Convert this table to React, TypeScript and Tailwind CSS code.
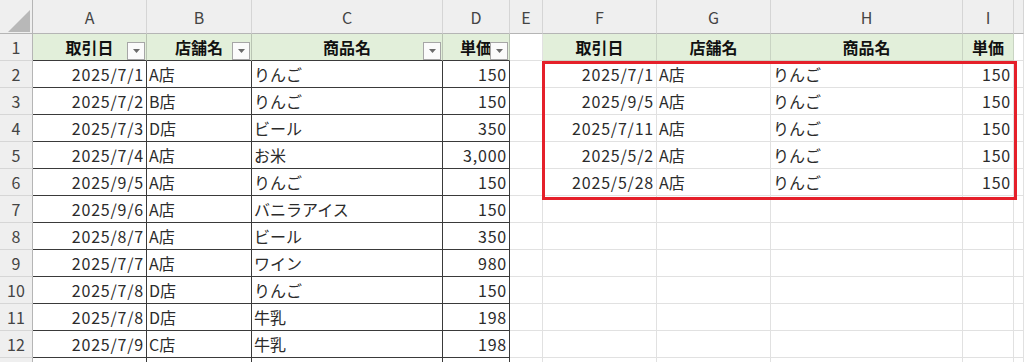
import React from 'react';

type Col = { letter: string; w: string };

const COLS: Col[] = [
  { letter: 'A', w: 'w-[114px]' },
  { letter: 'B', w: 'w-[105px]' },
  { letter: 'C', w: 'w-[191px]' },
  { letter: 'D', w: 'w-[67px]' },
  { letter: 'E', w: 'w-[33px]' },
  { letter: 'F', w: 'w-[114px]' },
  { letter: 'G', w: 'w-[114px]' },
  { letter: 'H', w: 'w-[192px]' },
  { letter: 'I', w: 'w-[51px]' },
  { letter: '', w: 'flex-1' },
];

// left table (A-D) and extracted rows (F-I)
const sales = [
  ['2025/7/1', 'A店', 'りんご', '150'],
  ['2025/7/2', 'B店', 'りんご', '150'],
  ['2025/7/3', 'D店', 'ビール', '350'],
  ['2025/7/4', 'A店', 'お米', '3,000'],
  ['2025/9/5', 'A店', 'りんご', '150'],
  ['2025/9/6', 'A店', 'バニラアイス', '150'],
  ['2025/8/7', 'A店', 'ビール', '350'],
  ['2025/7/7', 'A店', 'ワイン', '980'],
  ['2025/7/8', 'D店', 'りんご', '150'],
  ['2025/7/8', 'D店', '牛乳', '198'],
  ['2025/7/9', 'C店', '牛乳', '198'],
  ['', '', '', ''],
];

const picked = [
  ['2025/7/1', 'A店', 'りんご', '150'],
  ['2025/9/5', 'A店', 'りんご', '150'],
  ['2025/7/11', 'A店', 'りんご', '150'],
  ['2025/5/2', 'A店', 'りんご', '150'],
  ['2025/5/28', 'A店', 'りんご', '150'],
];

const headers = ['取引日', '店舗名', '商品名', '単価'];

const FilterButton = () => (
  <div className="absolute right-[1px] top-[8px] w-[18px] h-[18px] bg-[#fbfbfb] border border-[#a6a6a6] flex items-center justify-center">
    <svg width="7" height="4" viewBox="0 0 7 4">
      <path d="M0 0 L7 0 L3.5 4 Z" fill="#6b6b6b" />
    </svg>
  </div>
);

function HeaderCell({ col, text, filter }: { col: Col; text: string; filter: boolean }) {
  return (
    <div
      className={`${col.w} relative h-[27px] shrink-0 bg-[#e2efda] border-r border-r-[#b9c4b3] border-b border-b-[#3a3a3a] flex items-center justify-center font-bold text-[#111]`}
    >
      {text}
      {filter && <FilterButton />}
    </div>
  );
}

function DataCell({ col, text, right, dark }: { col: Col; text: string; right?: boolean; dark?: boolean }) {
  const borders = dark
    ? 'border-r border-r-[#3a3a3a] border-b border-b-[#3a3a3a]'
    : 'border-r border-r-[#e1e1e1] border-b border-b-[#e1e1e1]';
  return (
    <div
      className={`${col.w} h-[27px] shrink-0 bg-white ${borders} flex items-center whitespace-nowrap overflow-hidden ${
        right ? 'justify-end pr-[2px] tracking-[0.8px]' : 'pl-[2px]'
      }`}
    >
      {text}
    </div>
  );
}

function RowHead({ n }: { n?: number }) {
  return (
    <div className="w-[33px] h-[27px] shrink-0 bg-[#efefef] border-r border-r-[#b5b5b5] border-b border-b-[#d6d6d6] flex items-center justify-center text-[#444]">
      {n}
    </div>
  );
}

export default function App() {
  return (
    <div className="w-[1024px] h-[362px] overflow-hidden bg-white font-['Noto_Sans_CJK_JP','Noto_Sans',sans-serif] text-[16px] text-[#2b2b2b] leading-none">
      <div className="relative">
        {/* column letters */}
        <div className="flex h-[34px]">
          <div className="w-[33px] shrink-0 bg-[#efefef] border-r border-r-[#b5b5b5] border-b border-b-[#b5b5b5] relative">
            <svg className="absolute left-[8px] top-[10px]" width="22" height="22" viewBox="0 0 22 22">
              <path d="M22 0 L22 22 L0 22 Z" fill="#b8b8b8" />
            </svg>
          </div>
          {COLS.map((c, i) => (
            <div
              key={i}
              className={`${c.w} shrink-0 bg-[#efefef] border-r border-r-[#d5d5d5] border-b border-b-[#b5b5b5] flex items-center justify-center text-[#444]`}
            >
              {c.letter}
            </div>
          ))}
        </div>

        {/* row 1: headers */}
        <div className="flex">
          <RowHead n={1} />
          {headers.map((h, i) => (
            <HeaderCell key={i} col={COLS[i]} text={h} filter />
          ))}
          <DataCell col={COLS[4]} text="" />
          {headers.map((h, i) => (
            <div
              key={i}
              className={`${COLS[5 + i].w} h-[27px] shrink-0 bg-[#e2efda] border-r border-r-[#c9d4c3] border-b border-b-[#c9d4c3] flex items-center justify-center font-bold text-[#111]`}
            >
              {h}
            </div>
          ))}
          <DataCell col={COLS[9]} text="" />
        </div>

        {/* data rows; the last one is only a sliver at the bottom edge */}
        {sales.map((r, ri) => {
          const p = picked[ri];
          return (
            <div key={ri} className="flex">
              <RowHead n={ri < 11 ? ri + 2 : undefined} />
              <DataCell col={COLS[0]} text={r[0]} right dark />
              <DataCell col={COLS[1]} text={r[1]} dark />
              <DataCell col={COLS[2]} text={r[2]} dark />
              <DataCell col={COLS[3]} text={r[3]} right dark />
              <DataCell col={COLS[4]} text="" />
              <DataCell col={COLS[5]} text={p ? p[0] : ''} right />
              <DataCell col={COLS[6]} text={p ? p[1] : ''} />
              <DataCell col={COLS[7]} text={p ? p[2] : ''} />
              <DataCell col={COLS[8]} text={p ? p[3] : ''} right />
              <DataCell col={COLS[9]} text="" />
            </div>
          );
        })}

        {/* red selection outline over F2:I6 */}
        <div className="absolute left-[542px] top-[61px] w-[475px] h-[139px] border-[3px] border-[#e5202a] pointer-events-none" />
      </div>
    </div>
  );
}
